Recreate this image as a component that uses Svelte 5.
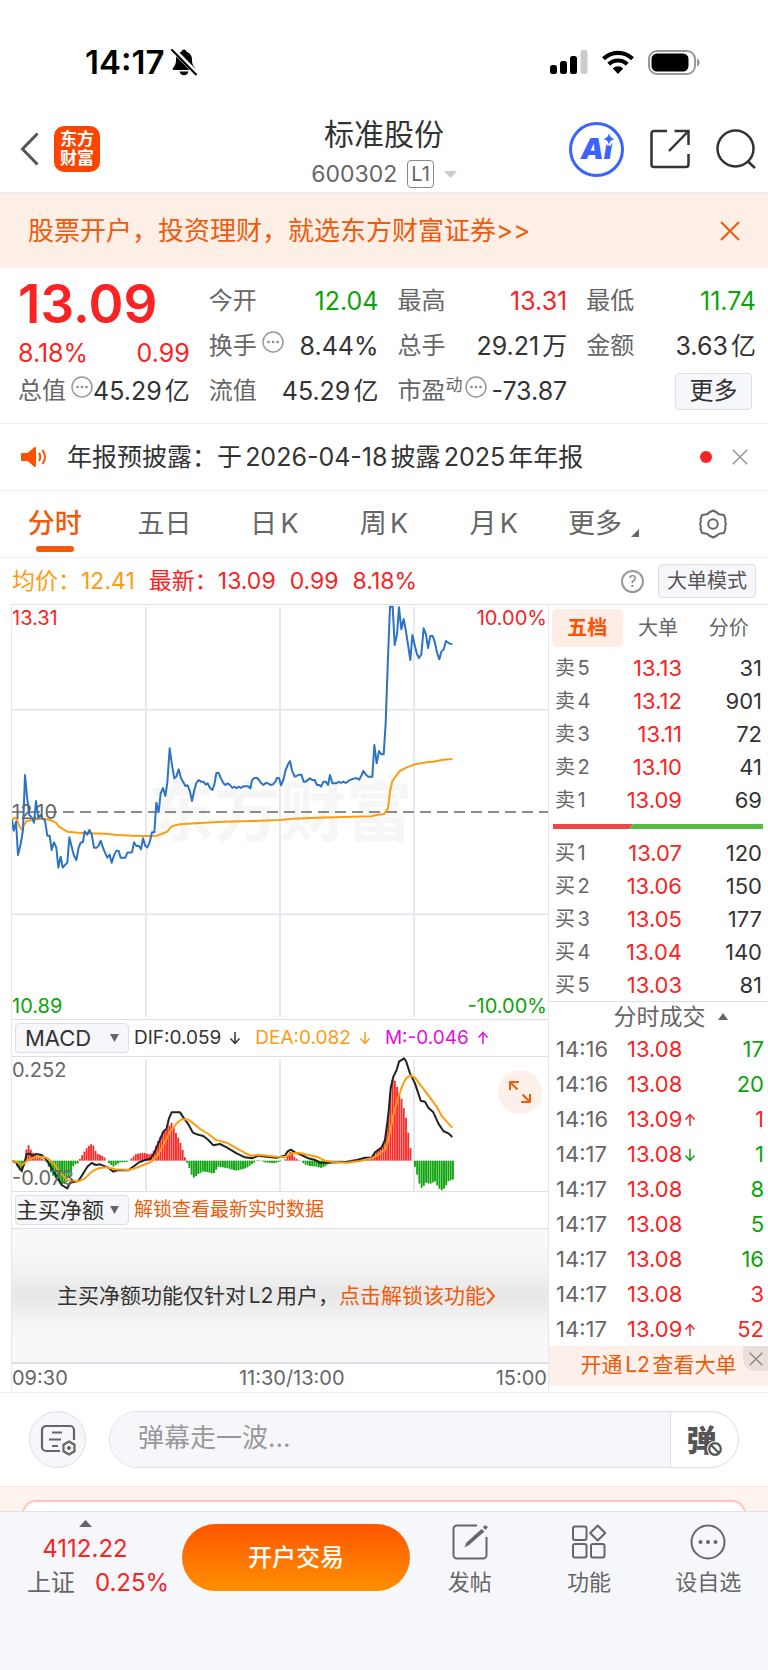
<script>
  const quotes = [
    { label: "今开", value: "12.04", tone: "down" },
    { label: "最高", value: "13.31", tone: "up" },
    { label: "最低", value: "11.74", tone: "down" },
    { label: "换手", value: "8.44%", info: true },
    { label: "总手", value: "29.21万" },
    { label: "金额", value: "3.63亿" },
    { label: "总值", value: "45.29亿", info: true },
    { label: "流值", value: "45.29亿" },
    { label: "市盈", sup: "动", value: "-73.87", info: true },
  ];

  const periods = ["分时", "五日", "日K", "周K", "月K", "更多"];
  let period = $state("分时");

  const bookTabs = ["五档", "大单", "分价"];
  let bookTab = $state("五档");

  const asks = [
    ["卖5", "13.13", 31],
    ["卖4", "13.12", 901],
    ["卖3", "13.11", 72],
    ["卖2", "13.10", 41],
    ["卖1", "13.09", 69],
  ];
  const bids = [
    ["买1", "13.07", 120],
    ["买2", "13.06", 150],
    ["买3", "13.05", 177],
    ["买4", "13.04", 140],
    ["买5", "13.03", 81],
  ];

  const ticks = [
    { time: "14:16", price: "13.08", vol: 17, side: "down" },
    { time: "14:16", price: "13.08", vol: 20, side: "down" },
    { time: "14:16", price: "13.09", vol: 1, side: "up", move: "up" },
    { time: "14:17", price: "13.08", vol: 1, side: "down", move: "down" },
    { time: "14:17", price: "13.08", vol: 8, side: "down" },
    { time: "14:17", price: "13.08", vol: 5, side: "down" },
    { time: "14:17", price: "13.08", vol: 16, side: "down" },
    { time: "14:17", price: "13.08", vol: 3, side: "up" },
    { time: "14:17", price: "13.09", vol: 52, side: "up", move: "up" },
  ];

  let message = $state("");

  // chart series, in viewBox units
  const priceLine =
    "36,660 41,692 48,665 54,765 62,732 69,690 75,525 81,590 88,645 95,652 102,668 108,603 115,655 121,645 128,655 135,662 142,707 149,707 155,750 162,727 169,743 175,803 182,770 188,803 195,795 202,788 208,712 215,740 222,767 229,780 236,743 242,728 249,726 254,694 262,704 268,690 275,703 282,743 290,743 296,737 302,722 309,743 316,760 322,773 329,764 335,788 342,766 349,752 356,752 362,773 376,773 382,758 396,757 402,727 409,738 417,738 423,748 429,715 436,738 442,742 449,727 456,697 463,697 469,608 476,636 482,580 489,564 496,588 502,548 509,445 516,495 523,535 529,530 536,508 543,535 550,547 556,558 563,556 570,575 576,603 583,570 589,549 596,540 603,545 610,545 617,554 623,550 630,564 637,570 643,554 649,519 656,519 663,535 670,549 676,555 683,550 690,555 697,564 704,560 710,565 716,560 723,564 730,559 744,559 751,565 756,541 763,534 771,534 777,540 784,550 790,555 797,549 804,550 812,555 819,553 826,545 831,534 837,534 843,556 850,540 857,510 864,493 870,483 876,512 884,530 890,528 897,524 904,524 911,545 917,545 930,535 937,540 944,540 951,555 958,555 963,560 970,545 977,545 984,555 990,525 997,550 1010,550 1016,545 1023,549 1030,545 1037,549 1050,540 1064,535 1071,535 1078,539 1085,525 1090,513 1098,524 1105,530 1117,530 1123,435 1130,490 1137,453 1144,463 1151,463 1157,370 1163,200 1170,20 1178,20 1184,135 1191,103 1197,22 1204,88 1211,57 1218,95 1231,180 1237,105 1244,135 1251,163 1257,174 1264,163 1271,85 1278,103 1284,144 1291,108 1298,108 1304,125 1311,157 1318,178 1324,155 1331,148 1338,123 1347,130 1357,133";
  const avgLine =
    "36,660 42,654 49,655 58,678 66,690 72,675 80,663 95,660 118,657 138,657 155,662 168,668 177,680 190,688 202,695 235,698 265,700 315,701 350,705 400,707 430,708 470,707 485,702 502,695 510,684 520,677 540,673 600,669 670,665 760,663 840,660 880,656 950,653 1030,651 1115,649 1130,645 1152,642 1164,625 1170,575 1177,543 1198,514 1220,502 1245,493 1280,487 1300,485 1330,479 1357,477";
  const difLine =
    "36,438 48,442 55,455 65,468 73,445 80,417 90,416 97,423 107,417 125,420 140,435 155,460 170,485 185,510 202,520 210,503 235,498 250,475 262,455 275,444 288,450 300,448 325,458 340,470 355,465 385,466 400,455 415,443 435,435 450,432 462,415 475,385 490,350 500,340 507,310 515,292 540,292 552,310 565,328 578,352 590,358 610,363 625,375 640,391 660,387 680,397 710,415 735,427 755,430 775,422 800,425 830,428 855,422 862,410 872,404 885,412 905,420 925,430 945,435 960,443 985,443 1040,440 1060,438 1095,428 1115,428 1125,412 1145,397 1155,375 1165,300 1172,220 1180,185 1190,165 1197,140 1212,130 1218,138 1230,175 1245,205 1262,257 1275,260 1285,278 1300,292 1315,325 1330,348 1345,355 1357,366";
  const deaLine =
    "36,438 50,441 66,450 80,438 100,428 130,425 145,432 165,450 185,478 202,495 235,499 255,490 275,470 295,460 320,457 345,463 385,465 405,460 430,450 455,440 470,425 490,390 510,350 530,325 545,313 565,314 580,325 600,342 625,357 650,376 680,383 705,397 735,414 755,423 775,419 830,425 855,426 875,415 900,414 930,421 955,427 975,437 1000,441 1040,443 1080,438 1115,430 1130,422 1155,405 1165,375 1180,300 1195,245 1210,205 1220,188 1232,182 1245,188 1265,215 1290,248 1310,275 1325,303 1345,325 1357,338";

  // histogram envelope: [x, height], bars are sampled from it
  const hist = [
    [36, -2], [48, -8], [58, -28], [66, -35], [72, -10], [76, 0], [77, 28], [85, 48], [94, 30], [104, 18],
    [118, 10], [130, 4], [136, 0], [142, -8], [155, -40], [175, -62], [188, -72], [200, -65], [212, -35],
    [222, -12], [234, -8], [240, 5], [258, 35], [272, 50], [280, 46], [290, 22], [312, 12], [320, 0],
    [328, -8], [340, -18], [352, -10], [360, -5], [380, -4], [388, 0], [396, 8], [408, 20], [432, 24],
    [452, 18], [462, 30], [475, 60], [490, 88], [505, 98], [513, 118], [525, 90], [540, 58], [552, 20],
    [558, 0], [565, -12], [575, -42], [583, -52], [595, -40], [610, -32], [630, -36], [640, -40],
    [655, -18], [680, -22], [710, -30], [740, -22], [765, -4], [775, 2], [785, 0], [793, -5], [825, -8],
    [840, -2], [850, 0], [858, 5], [868, 25], [876, 28], [884, 10], [895, 2], [905, 0], [912, -10],
    [930, -16], [950, -18], [965, -22], [980, -14], [990, -5], [1010, -2], [1040, 0], [1060, 4], [1080, 4],
    [1095, 8], [1115, 10], [1125, 20], [1145, 38], [1155, 60], [1165, 130], [1172, 210], [1180, 253],
    [1190, 225], [1205, 185], [1218, 130], [1230, 50], [1236, 5], [1241, -5], [1250, -35], [1260, -75],
    [1268, -85], [1276, -65], [1290, -70], [1305, -62], [1315, -80], [1324, -90], [1335, -82], [1345, -62],
    [1362, -55],
  ];
  const ZERO = 437;

  function heightAt(x) {
    const i = hist.findIndex((p) => p[0] >= x);
    if (i <= 0) return hist[0][1];
    const [x0, h0] = hist[i - 1];
    const [x1, h1] = hist[i];
    return h0 + ((h1 - h0) * (x - x0)) / (x1 - x0);
  }

  const bars = Array.from({ length: 198 }, (_, i) => {
    const x = 36 + i * 6.7;
    return { x, h: heightAt(x + 3) };
  });
</script>

{#snippet dots(cls)}
  <svg class={cls} viewBox="0 0 22 22" aria-hidden="true">
    <circle cx="11" cy="11" r="10" fill="none" stroke="#999" stroke-width="1.5" />
    <g fill="#888"><circle cx="6.5" cy="11" r="1.3" /><circle cx="11" cy="11" r="1.3" /><circle cx="15.5" cy="11" r="1.3" /></g>
  </svg>
{/snippet}

{#snippet cross(cls)}
  <svg class={cls} viewBox="0 0 20 20" aria-hidden="true">
    <path d="M1 1 19 19M19 1 1 19" fill="none" stroke="currentColor" stroke-width="2" />
  </svg>
{/snippet}

{#snippet arrow(dir)}
  <svg class="arrow" viewBox="0 0 12 14" aria-hidden="true">
    <path
      d={dir === "up" ? "M6 13V2M1.5 6.5 6 1.5l4.5 5" : "M6 1v11M1.5 7.5 6 12.5l4.5-5"}
      fill="none" stroke="currentColor" stroke-width="1.5"
    />
  </svg>
{/snippet}

{#snippet bookTable(rows, caption)}
  <table class="book" aria-label={caption}>
    <tbody>
      {#each rows as [label, price, vol]}
        <tr><th scope="row">{label}</th><td class="price up">{price}</td><td>{vol}</td></tr>
      {/each}
    </tbody>
  </table>
{/snippet}

<div class="page">
  <div class="status">
    <div class="clock">
      <span>14:17</span>
      <svg class="bell" viewBox="0 0 28 28">
        <path d="M14 1.5c1.4 0 2.4 1 2.5 2.2 3.5 1.1 5.5 4.1 5.5 8 0 4.5 1.3 6.3 3 8.3.8 1 .3 2-.8 2H3.8c-1.1 0-1.600-1-.8-2 1.700-2 3-3.800 3-8.300 0-3.900 2-6.900 5.500-8C11.600 2.500 12.600 1.500 14 1.500Z" />
        <path d="M9.5 23.6h9a4.600 4.600 0 0 1-9 0Z" />
        <path d="M3 1.5 27 26" stroke="#fff" stroke-width="5" />
        <path d="M2 2 26 26.5" stroke="#000" stroke-width="2" stroke-linecap="round" />
      </svg>
    </div>
    <div class="signals">
      <svg class="signal" viewBox="0 0 38 24">
        <rect x="0" y="15" width="7" height="9" rx="2.5" />
        <rect x="10" y="11" width="7" height="13" rx="2.5" />
        <rect x="20" y="6" width="7" height="18" rx="2.5" />
        <rect x="30.5" y="0" width="7" height="24" rx="2.5" fill="#ccc" />
      </svg>
      <svg class="wifi" viewBox="0 0 32 24">
        <g fill="none" stroke="#000" stroke-width="4.2">
          <path d="M1.5 8.8a20.5 20.5 0 0 1 29 0" />
          <path d="M6.8 14.3a13 13 0 0 1 18.4 0" />
        </g>
        <path d="M16 24l-5.2-5.6a7.4 7.4 0 0 1 10.4 0Z" />
      </svg>
      <svg class="battery" viewBox="0 0 52 25">
        <rect x="1" y="1" width="46" height="23" rx="8" fill="none" stroke="#999" stroke-width="2" />
        <rect x="3.5" y="3.5" width="37" height="18" rx="5.5" />
        <path d="M49 8.5c3.5 1 3.5 7 0 8Z" fill="#999" />
      </svg>
    </div>
  </div>

  <header class="topbar">
    <div class="side">
      <button class="plain" aria-label="返回">
        <svg class="back" viewBox="0 0 19 34"><path d="M17.5 1.5 2.5 17l15 15.5" fill="none" stroke="#555" stroke-width="3" /></svg>
      </button>
      <a class="logo" href="#home"><span>东方</span><span>财富</span></a>
    </div>
    <div class="heading">
      <h1>标准股份</h1>
      <div class="code">
        <span>600302</span>
        <span class="level">L1</span>
        <svg class="caret" viewBox="0 0 13 7"><path d="M0 0h13L6.5 7Z" fill="#ccc" /></svg>
      </div>
    </div>
    <div class="side right">
      <button class="ai">
        <span>Ai</span>
        <svg class="spark" viewBox="-2 -2 16 16"><path d="M6 0c.8 3.800 2.200 5.200 6 6-3.800.8-5.200 2.200-6 6-.8-3.800-2.200-5.200-6-6 3.800-.8 5.200-2.200 6-6Z" fill="#3a64fd" stroke="#fff" stroke-width="4" paint-order="stroke" /></svg>
      </button>
      <button class="plain" aria-label="分享">
        <svg class="tool" viewBox="0 0 40 40" fill="none" stroke="#333" stroke-width="2.5">
          <path d="M17 2H4a2.500 2.500 0 0 0-2.500 2.500v31A2.500 2.500 0 0 0 4 38h32a2.500 2.500 0 0 0 2.500-2.500V25" />
          <path d="M24.5 2h14v14M38 2.5 19 22" />
        </svg>
      </button>
      <button class="plain" aria-label="搜索">
        <svg class="tool" viewBox="0 0 40 40" fill="none" stroke="#333" stroke-width="2.5">
          <circle cx="19.5" cy="19.5" r="18" /><path d="m31.5 32 7.500 7" />
        </svg>
      </button>
    </div>
  </header>

  <div class="promo">
    <a href="#open">股票开户，投资理财，就选东方财富证券&gt;&gt;</a>
    <button class="plain" aria-label="关闭">{@render cross("x20")}</button>
  </div>

  <section class="quote">
    <div class="last up">
      <strong>13.09</strong>
      <div class="change"><span>8.18%</span><span>0.99</span></div>
    </div>
    {#each quotes as q}
      <div class="cell">
        <span class="label">{q.label}{#if q.sup}<sup>{q.sup}</sup>{/if}{#if q.info}{@render dots(q.sup ? "info near" : "info")}{/if}</span>
        <span class={q.tone}>{q.value}</span>
      </div>
    {/each}
    <div class="cell more"><button>更多</button></div>
  </section>

  <div class="notice">
    <svg class="speaker" viewBox="0 0 26 22" aria-hidden="true">
      <path d="M1 7h5.500L13 1.500c1-.8 2-.3 2 1v17c0 1.300-1 1.800-2 1L6.500 15H1Q0 15 0 14V8Q0 7 1 7Z" fill="#ff5000" />
      <path d="M18 7q2.500 4 0 8M21.500 4q5 7 0 14" fill="none" stroke="#ff5000" stroke-width="2" />
    </svg>
    <a href="#report">年报预披露：于2026-04-18披露2025年年报</a>
    <i class="dot"></i>
    <button class="plain grey" aria-label="关闭">{@render cross("x16")}</button>
  </div>

  <nav class="periods">
    {#each periods as p}
      <button class:active={period === p} onclick={() => (period = p)}>
        {p}
        {#if p === "更多"}<svg class="corner" viewBox="0 0 8 8"><path d="M8 0v8H0Z" fill="#666" /></svg>{/if}
      </button>
    {/each}
    <button aria-label="设置">
      <svg class="gear" viewBox="0 0 30 30" fill="none" stroke="#666" stroke-width="2">
        <path d="M11 3.500 15 1.500l4 2q1 2 3.500 2l3.500.5 1.500 4.500q-1 2.500.5 4.500-1.500 2-.5 4.500L26 24l-3.500.5q-2.500 0-3.500 2l-4 2-4-2q-1-2-3.500-2L4 24l-1.500-4.500q1-2.500-.5-4.500 1.500-2 .5-4.500L4 6l3.500-.5q2.500 0 3.500-2Z" stroke-linejoin="round" />
        <circle cx="15" cy="15" r="4.8" />
      </svg>
    </button>
  </nav>

  <div class="summary">
    <span class="avg">均价：12.41</span>
    <span class="up">最新：13.09</span>
    <span class="up">0.99</span>
    <span class="up">8.18%</span>
    <button class="help" aria-label="说明">?</button>
    <button class="mode">大单模式</button>
  </div>

  <div class="market">
    <div class="charts">
      <div class="plot price-plot">
        <span class="watermark">东方财富</span>
        <svg viewBox="36 15 1608 1242" preserveAspectRatio="none" role="img" aria-label="分时走势">
          <g stroke="#e6e8f0" stroke-width="2">
            <path d="M438 21V1250M840 21V1250M1242 21V1250M36 329H1644M36 943H1644" />
          </g>
          <path d="M36 636H1644" stroke="#8c8c8c" stroke-width="2" stroke-dasharray="11 6" />
          <polyline points={avgLine} stroke="#ff9b0f" stroke-width="2" />
          <polyline points={priceLine} stroke="#2d73c3" stroke-width="2" />
        </svg>
        <span class="tag tl up">13.31</span>
        <span class="tag tr up">10.00%</span>
        <span class="tag ml">12.10</span>
        <span class="tag bl down">10.89</span>
        <span class="tag br down">-10.00%</span>
      </div>

      <div class="indicator">
        <div class="picker">
          <select class="wide" aria-label="指标"><option>MACD</option></select>
          <svg viewBox="0 0 10 9"><path d="M0 0h10L5 9Z" fill="#666" /></svg>
        </div>
        <span>DIF:0.059 {@render arrow("down")}</span>
        <span class="avg">DEA:0.082 {@render arrow("down")}</span>
        <span class="magenta">M:-0.046 {@render arrow("up")}</span>
      </div>

      <div class="plot macd-plot">
        <svg viewBox="36 126 1608 402" preserveAspectRatio="none" role="img" aria-label="MACD">
          <path d="M438 132V528M840 132V528M1242 132V528" stroke="#e6e8f0" stroke-width="2" />
          {#each bars as b}
            <rect x={b.x} y={b.h > 0 ? ZERO - b.h : ZERO} width="5.6" height={Math.abs(b.h)} fill={b.h > 0 ? "#f92a2a" : "#0ca30c"} />
          {/each}
          <polyline points={difLine} stroke="#222" stroke-width="2" />
          <polyline points={deaLine} stroke="#ff9b0f" stroke-width="2" />
        </svg>
        <span class="tag tl">0.252</span>
        <span class="tag bl">-0.073</span>
        <button class="expand" aria-label="放大">
          <svg viewBox="0 0 22 22" fill="none" stroke="#f05a0a" stroke-width="2">
            <path d="M1 9V1h9M1.500 1.500 8.500 8.500M21 13v8h-9M20.500 20.500l-7-7" />
          </svg>
        </button>
      </div>

      <div class="indicator">
        <div class="picker">
          <select aria-label="副图指标"><option>主买净额</option></select>
          <svg viewBox="0 0 10 9"><path d="M0 0h10L5 9Z" fill="#666" /></svg>
        </div>
        <a href="#unlock">解锁查看最新实时数据</a>
      </div>

      <div class="locked">
        <span>主买净额功能仅针对L2用户，</span><a href="#unlock">点击解锁该功能<svg viewBox="0 0 9 18"><path d="M1 1l7 8-7 8" fill="none" stroke="currentColor" stroke-width="2" /></svg></a>
      </div>

      <div class="axis"><span>09:30</span><span class="noon">11:30/13:00</span><span>15:00</span></div>
    </div>

    <aside class="depth">
      <div class="book-tabs">
        {#each bookTabs as tab}
          <button class:active={bookTab === tab} onclick={() => (bookTab = tab)}>{tab}</button>
        {/each}
      </div>
      {@render bookTable(asks, "卖盘")}
      <svg class="ratio" viewBox="0 0 210 5" preserveAspectRatio="none" aria-hidden="true">
        <path d="M0 0h80l-4 5H0Z" fill="#ee4646" /><path d="M80 0h130v5H76Z" fill="#58ba42" />
      </svg>
      {@render bookTable(bids, "买盘")}

      <button class="ticks-title">分时成交 <svg viewBox="0 0 10 7"><path d="M0 7h10L5 0Z" fill="#666" /></svg></button>
      <table class="ticks" aria-label="分时成交">
        <tbody>
          {#each ticks as t}
            <tr>
              <th scope="row">{t.time}</th>
              <td class="up">{t.price}{#if t.move}<span class={t.move}>{@render arrow(t.move)}</span>{/if}</td>
              <td class={t.side}>{t.vol}</td>
            </tr>
          {/each}
        </tbody>
      </table>
      <div class="l2">
        <a href="#l2">开通L2查看大单</a>
        <button aria-label="关闭">{@render cross("x14")}</button>
      </div>
    </aside>
  </div>

  <form class="danmu" onsubmit={(e) => e.preventDefault()}>
    <button type="button" class="settings" aria-label="弹幕设置">
      <svg viewBox="0 0 36 32" fill="none" stroke="#666" stroke-width="2.2">
        <path d="M20 27H6a4 4 0 0 1-4-4V6a4 4 0 0 1 4-4h24a4 4 0 0 1 4 4v10" />
        <path d="M12 8.500h10M9 15.500h12M12 22h6" />
        <path d="m29 17.500 5.500 3.200v6.600L29 30.500l-5.500-3.200v-6.600Z" />
        <circle cx="29" cy="24" r="1.5" fill="#666" stroke-width="1" />
      </svg>
    </button>
    <div class="box">
      <input type="text" placeholder="弹幕走一波..." aria-label="弹幕" bind:value={message} />
      <button type="button" class="toggle">
        <span>弹</span>
        <svg class="ban" viewBox="0 0 16 16">
          <circle cx="8" cy="8" r="6.5" fill="#fff" stroke="#fff" stroke-width="3" />
          <circle cx="8" cy="8" r="5.8" fill="#fff" stroke="#555" stroke-width="2.2" />
          <path d="m4.500 4.500 7 7" stroke="#555" stroke-width="2.2" />
        </svg>
      </button>
    </div>
  </form>

  <div class="peek"><div></div></div>

  <footer class="dock">
    <button class="index">
      <svg viewBox="0 0 13 7"><path d="M0 7h13L6.500 0Z" fill="#666" /></svg>
      <span class="up">4112.22</span>
      <span class="row"><span>上证</span><span class="up">0.25%</span></span>
    </button>
    <button class="trade">开户交易</button>
    <div class="actions">
      <button>
        <svg viewBox="0 0 36 36" fill="none" stroke="#666" stroke-width="2">
          <path d="M25 1.500H5A3.500 3.500 0 0 0 1.500 5v26A3.500 3.500 0 0 0 5 34.500h26a3.500 3.500 0 0 0 3.500-3.500V13" />
          <path d="m12.500 23.500 2-5L29.500 5l3 2.500L17 21Z" fill="#666" stroke="none" />
          <path d="m31 3.500 2-2.500 3 2-2.500 3Z" fill="#666" stroke="none" />
        </svg>
        发帖
      </button>
      <button>
        <svg viewBox="0 0 36 36" fill="none" stroke="#666" stroke-width="2">
          <rect x="2" y="2.5" width="13.5" height="13.5" rx="2" />
          <rect x="2" y="20" width="13.5" height="13.5" rx="2" />
          <rect x="20" y="20" width="13.5" height="13.5" rx="2" />
          <path d="m26.700 1.500 7.500 7.500-7.500 7.500L19.200 9Z" stroke-linejoin="round" />
        </svg>
        功能
      </button>
      <button>
        <svg viewBox="0 0 36 36" fill="none" stroke="#666" stroke-width="2">
          <circle cx="18" cy="18" r="16.5" />
          <g fill="#666" stroke="none"><circle cx="10.5" cy="18" r="2" /><circle cx="18" cy="18" r="2" /><circle cx="25.5" cy="18" r="2" /></g>
        </svg>
        设自选
      </button>
    </div>
  </footer>
</div>

<style>
  :global(body) { margin: 0; background: #fff; }

  .page { font-family: Inter, "Noto Sans CJK SC", sans-serif; font-size: 22px; line-height: 30px; color: #333; text-autospace: normal; }
  .page * { box-sizing: border-box; }
  button, input, select { font: inherit; color: inherit; margin: 0; padding: 0; border: 0; background: none; text-autospace: inherit; }
  button { cursor: pointer; }
  a { color: inherit; text-decoration: none; }
  svg { display: block; flex: none; }
  .plain { display: block; }
  .up { color: #f92323; }
  .down { color: #0ca30c; }
  .avg { color: #ff9b0f; }
  .magenta { color: #e010e0; }
  .x20 { width: 20px; height: 20px; }
  .x16 { width: 16px; height: 16px; }
  .x14 { width: 14px; height: 14px; }

  /* status bar */
  .status { display: flex; justify-content: space-between; align-items: center; padding: 44px 68px 32px 85px; color: #000; }
  .clock { display: flex; align-items: center; gap: 6px; font-size: 33px; line-height: 36px; font-weight: 600; }
  .bell { width: 28px; height: 28px; }
  .signals { display: flex; align-items: center; gap: 14px; }
  .signal { width: 38px; height: 24px; }
  .wifi { width: 32px; height: 24px; }
  .battery { width: 52px; height: 25px; }

  /* title bar */
  .topbar { display: grid; grid-template-columns: 1fr auto 1fr; align-items: center; padding: 4px 12px; border-bottom: 1px solid #e8ebf0; }
  .side { display: flex; align-items: center; gap: 15px; padding: 0 0 6px 8px; }
  .side.right { justify-content: flex-end; gap: 26px; padding-left: 0; }
  .back { width: 19px; height: 34px; }
  .logo { display: flex; flex-direction: column; justify-content: center; align-items: center; width: 46px; height: 46px; border-radius: 10px; background: #ff4400; color: #fff; font-size: 17px; line-height: 19px; font-weight: 700; }
  .heading { text-align: center; }
  h1 { margin: 0 0 8px; font-size: 30px; line-height: 36px; font-weight: 400; }
  .code { display: flex; align-items: center; justify-content: center; gap: 10px; height: 28px; color: #666; font-size: 23px; }
  .level { height: 28px; padding: 0 3px; border: 1px solid #888; border-radius: 4px; font-size: 20px; line-height: 26px; }
  .caret { width: 13px; height: 7px; }
  .ai { position: relative; width: 55px; height: 55px; border: 3px solid #3a64fd; border-radius: 50%; color: #3a64fd; font-size: 29px; line-height: 48px; font-weight: 900; font-style: italic; }
  .spark { position: absolute; top: 6px; right: 4px; width: 16px; height: 16px; }
  .tool { width: 40px; height: 40px; }

  .promo { display: flex; align-items: center; justify-content: space-between; padding: 20px 28px; background: #fdeee6; color: #f05a0a; font-size: 26px; line-height: 35px; }

  /* quote grid */
  .quote { display: grid; grid-template-columns: repeat(4, 1fr); grid-template-rows: 45px 45px 46px; column-gap: 19px; padding: 10px 12px 9px 18px; border-bottom: 1px solid #f0f1f4; font-size: 25px; }
  .last { grid-row: span 2; }
  .last strong { display: block; margin-bottom: 8px; font-size: 53px; line-height: 52px; font-weight: 600; }
  .change, .cell { display: flex; align-items: center; justify-content: space-between; white-space: nowrap; }
  .label { display: flex; align-items: center; color: #666; font-size: 24px; }
  .label sup { align-self: flex-start; font-size: 17px; line-height: 18px; }
  .info { width: 22px; height: 22px; margin: 0 0 8px 5px; }
  .near { margin-left: 2px; }
  .more { justify-content: flex-end; padding-right: 4px; font-size: 24px; }
  .more button { width: 77px; height: 37px; border: 1px solid #dcdfe6; border-radius: 4px; background: #f6f7fa; }

  .notice { display: flex; align-items: center; padding: 18px 20px 18px 21px; border-bottom: 1px solid #f0f1f4; font-size: 25px; }
  .notice a { flex: 1; margin-left: 20px; }
  .speaker { width: 26px; height: 22px; }
  .dot { width: 12px; height: 12px; margin-right: 20px; border-radius: 50%; background: #f92323; }
  .grey { color: #999; }

  .periods { display: grid; grid-template-columns: repeat(7, 1fr); border-bottom: 1px solid #f0f1f4; color: #666; font-size: 27px; }
  .periods button { position: relative; display: flex; align-items: center; justify-content: center; height: 66px; }
  .periods .active { color: #f05a0a; font-weight: 500; }
  .periods .active::after { content: ""; position: absolute; bottom: 5px; left: calc(50% - 19px); width: 38px; height: 6px; border-radius: 3px; background: #f05a0a; }
  .corner { width: 8px; height: 8px; margin: 18px 0 0 9px; }
  .gear { width: 30px; height: 30px; }

  .summary { display: flex; align-items: center; gap: 14px; height: 46px; padding: 0 12px; font-size: 23px; white-space: nowrap; }
  .help { width: 23px; height: 23px; margin-left: auto; border: 2px solid #999; border-radius: 50%; color: #888; font-size: 16px; line-height: 19px; }
  .mode { height: 34px; padding: 0 8px; border: 1px solid #dcdfe6; border-radius: 4px; background: #f6f7fa; color: #555; font-size: 20px; }

  /* charts and order book */
  .market { display: grid; grid-template-columns: minmax(0, 1fr) 220px; margin-left: 11px; border-top: 1px solid #dfe2e8; }
  .charts { border-left: 1px solid #e6e8f0; font-size: 20px; }
  .plot { position: relative; border-bottom: 1px solid #dcdfe6; }
  .plot > svg { position: relative; width: 100%; fill: none; }
  .plot path, .plot polyline { vector-effect: non-scaling-stroke; fill: none; stroke-linejoin: round; }
  .price-plot > svg { height: 414px; }
  .macd-plot > svg { height: 134px; }
  .watermark { position: absolute; inset: 0; display: flex; align-items: center; justify-content: center; color: #f6f6f6; font-size: 66px; font-weight: 700; }
  .tag { position: absolute; font-size: 20px; line-height: 24px; }
  .tag:not(.up):not(.down) { color: #666; }
  .tl { top: 1px; left: 0; }
  .tr { top: 1px; right: 1px; }
  .ml { top: 195px; left: 0; }
  .bl { bottom: 1px; left: 0; }
  .br { bottom: 1px; right: 1px; }
  .indicator { display: flex; align-items: center; gap: 14px; height: 37px; padding-left: 3px; border-bottom: 1px solid #dcdfe6; font-size: 19px; white-space: nowrap; }
  .indicator a { color: #f05a0a; }
  .indicator > span { display: flex; align-items: center; gap: 8px; }
  .arrow { width: 12px; height: 14px; }
  .picker { position: relative; margin-right: -9px; }
  .picker select { appearance: none; display: block; width: 114px; height: 30px; border: 1px solid #dcdfe6; border-radius: 4px; background: #f6f7fa; font-size: 22px; line-height: 28px; }
  .picker .wide { padding-left: 9px; }
  .picker svg { position: absolute; top: 11px; right: 10px; width: 9px; height: 8px; pointer-events: none; }
  .expand { position: absolute; top: 13px; right: 6px; display: grid; place-items: center; width: 44px; height: 44px; border-radius: 50%; background: #fdf0ea; }
  .expand svg { width: 22px; height: 22px; }
  .locked { display: flex; align-items: center; justify-content: center; height: 135px; padding-right: 8px; border-bottom: 2px solid #dcdfe6; background: linear-gradient(#f8f8f8 15%, #f3f3f3 32%, #e8e8e8 46%, #e8e8e8 52%, #f4f4f4 68%, #f8f8f8 85%); font-size: 21px; white-space: nowrap; }
  .locked a { display: flex; align-items: center; color: #f05a0a; }
  .locked svg { width: 9px; height: 18px; }
  .axis { display: flex; justify-content: space-between; padding-right: 1px; color: #666; font-size: 20px; line-height: 28px; }
  .noon { padding-left: 20px; }

  .depth { border-left: 1px solid #e6e8f0; }
  .book-tabs { display: grid; grid-template-columns: repeat(3, 1fr); padding: 4px 4px 4px 3px; color: #666; font-size: 20px; }
  .book-tabs button { height: 38px; border-radius: 5px; }
  .book-tabs .active { background: #ffece4; color: #ff5000; font-weight: 700; }
  table { width: 100%; border-collapse: collapse; table-layout: fixed; }
  th, td { padding: 0; font-weight: 400; text-align: right; white-space: nowrap; }
  th { color: #666; text-align: left; }
  .book tr { height: 33px; }
  .book th { width: 60px; padding-left: 6px; font-size: 20px; }
  .book .price { width: 73px; }
  .book td:last-child { padding-right: 6px; }
  .ratio { width: calc(100% - 9px); height: 5px; margin: 8px 5px 7px 4px; }
  .ticks-title { display: flex; align-items: center; justify-content: center; gap: 12px; width: 100%; height: 30px; padding-left: 24px; border-top: 1px solid #dcdfe6; color: #666; font-size: 23px; line-height: 28px; }
  .ticks-title svg { width: 10px; height: 7px; }
  .ticks tr { height: 35px; }
  .ticks th { width: 78px; padding-left: 7px; }
  .ticks td:nth-child(2) { width: 70px; text-align: left; }
  .ticks td:last-child { padding-right: 4px; }
  .ticks td span { display: inline-block; margin-left: 2px; }
  .l2 { position: relative; height: 40px; background: #fdf0ea; color: #f05a0a; font-size: 21px; line-height: 38px; text-align: center; }
  .l2 button { position: absolute; top: 0; right: 0; display: grid; place-items: center; width: 25px; height: 25px; border-bottom-left-radius: 12px; background: #ebdfdb; color: #888; }

  /* comment box */
  .danmu { display: flex; align-items: center; gap: 23px; padding: 18px 29px; border-top: 1px solid #e8ebf0; border-bottom: 1px solid #f3eaea; }
  .settings { display: grid; place-items: center; width: 57px; height: 57px; border: 1px solid #dcdfe6; border-radius: 50%; background: #f6f7fa; }
  .settings svg { width: 36px; height: 32px; }
  .box { flex: 1; display: flex; height: 57px; border: 1px solid #dcdfe6; border-radius: 29px; overflow: hidden; }
  .box input { flex: 1; min-width: 0; padding: 0 28px 4px; border-right: 1px solid #dcdfe6; background: #f6f7fa; font-size: 26px; outline: none; }
  .box input::placeholder { color: #999; opacity: 1; }
  .toggle { position: relative; width: 67px; padding-right: 6px; color: #555; font-size: 30px; font-weight: 900; }
  .ban { position: absolute; right: 15px; bottom: 10px; width: 16px; height: 16px; }

  .peek { height: 24px; padding: 13px 22px 0; background: #fff3ee; overflow: hidden; }
  .peek div { height: 40px; border: 2px solid #ffc4ba; border-radius: 14px; background: #fff; }

  /* bottom dock */
  .dock { display: flex; align-items: flex-start; padding: 8px 0 79px; border-top: 1px solid #e0e3e6; background: #f6f7fa; color: #666; }
  .index { display: flex; flex-direction: column; align-items: center; width: 170px; margin-right: 12px; font-size: 24px; }
  .index svg { width: 13px; height: 7px; margin-bottom: 7px; }
  .index .row { display: flex; gap: 20px; margin-top: 4px; padding-left: 26px; }
  .trade { width: 228px; height: 67px; margin-top: 4px; border-radius: 34px; background: linear-gradient(#ff5500, #ff9000); color: #fff; font-size: 24px; font-weight: 500; }
  .actions { flex: 1; display: grid; grid-template-columns: repeat(3, 1fr); }
  .actions button { display: flex; flex-direction: column; align-items: center; gap: 7px; margin-top: 4px; }
  .actions svg { width: 36px; height: 36px; }
</style>
